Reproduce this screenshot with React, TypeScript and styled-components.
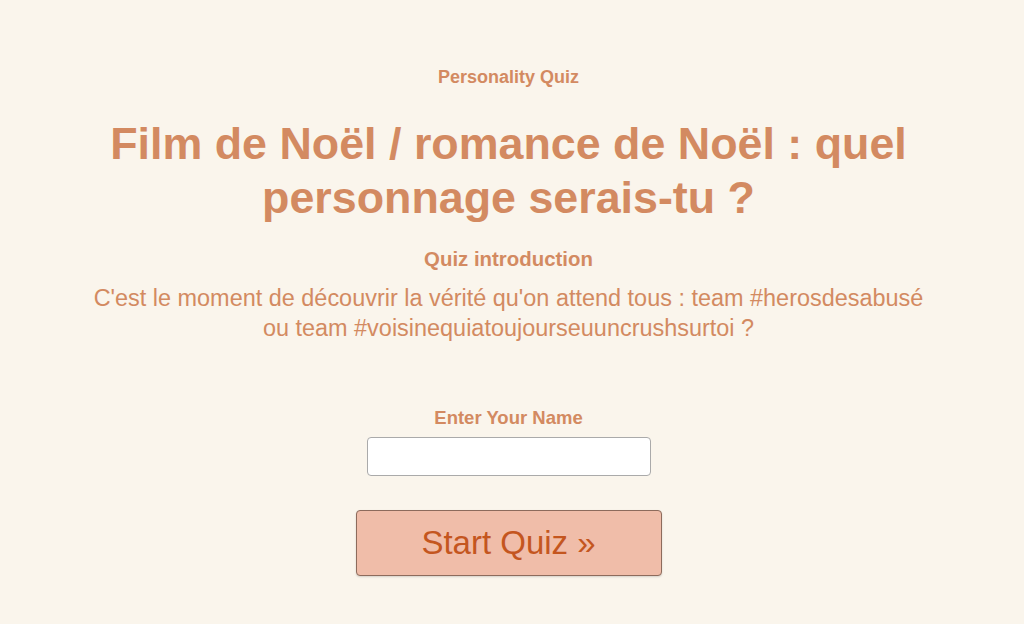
import React from "react";
import styled, { createGlobalStyle } from "styled-components";

const Global = createGlobalStyle`
  html, body { margin: 0; padding: 0; background: #faf5ec; }
  body { font-family: "Liberation Sans", Arial, sans-serif; }
`;

const Page = styled.div`
  min-height: 624px;
  display: flex;
  justify-content: center;
  padding-right: 7px;
  background: #faf5ec;
`;

const Container = styled.main`
  width: 850px;
  display: flex;
  flex-direction: column;
  align-items: center;
  text-align: center;
  color: #d38a61;
  padding-top: 66px;
`;

const Kicker = styled.div`
  font-size: 18px;
  font-weight: bold;
  line-height: 22px;
`;

const Title = styled.h1`
  margin: 28px 0 0;
  font-size: 44.8px;
  font-weight: bold;
  line-height: 54px;
`;

const SubHead = styled.h2`
  margin: 23px 0 0;
  font-size: 20.4px;
  font-weight: bold;
  line-height: 24px;
`;

const Intro = styled.p`
  margin: 12px 0 0;
  font-size: 23.45px;
  line-height: 30px;
`;

const Form = styled.div`
  margin-top: 64px;
  display: flex;
  flex-direction: column;
  align-items: center;
`;

const Label = styled.label`
  font-size: 18.5px;
  font-weight: bold;
  line-height: 22px;
`;

const NameInput = styled.input`
  margin-top: 8px;
  width: 284px;
  height: 39px;
  box-sizing: border-box;
  border: 1px solid #aaa;
  border-radius: 4px;
  background: #fff;
  font-size: 16px;
  padding: 0 8px;
`;

const StartButton = styled.button`
  margin-top: 34px;
  width: 306px;
  height: 66px;
  box-sizing: border-box;
  background: #f0bda9;
  color: #c4561f;
  border: 1px solid #8d6b5c;
  border-radius: 4px;
  font-family: "Liberation Sans", Arial, sans-serif;
  font-size: 33px;
  cursor: pointer;
  box-shadow: 0 1px 2px rgba(0, 0, 0, 0.15);
`;

export default function App() {
  return (
    <>
      <Global />
      <Page>
        <Container>
          <Kicker>Personality Quiz</Kicker>
          <Title>Film de Noël / romance de Noël : quel personnage serais-tu ?</Title>
          <SubHead>Quiz introduction</SubHead>
          <Intro>
            C'est le moment de découvrir la vérité qu'on attend tous : team #herosdesabusé ou team
            #voisinequiatoujourseuuncrushsurtoi ?
          </Intro>
          <Form>
            <Label htmlFor="name">Enter Your Name</Label>
            <NameInput id="name" type="text" />
            <StartButton>Start Quiz »</StartButton>
          </Form>
        </Container>
      </Page>
    </>
  );
}
